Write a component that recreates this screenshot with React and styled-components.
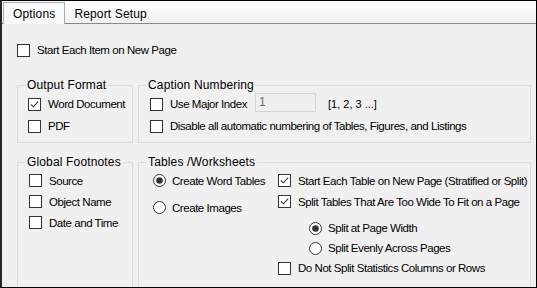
import React from "react";
import styled, { createGlobalStyle } from "styled-components";

const Global = createGlobalStyle`
  html, body { margin: 0; padding: 0; background: #f0f0f0; }
  body { font-family: "Liberation Sans", Arial, sans-serif; }
`;

const Window = styled.div`
  width: 537px;
  height: 288px;
  box-sizing: border-box;
  border: 1px solid #000;
  border-left: 2px solid #262626;
  background: #f0f0f0;
  overflow: hidden;
  display: flex;
  flex-direction: column;
  font-family: "Liberation Sans", Arial, sans-serif;
  font-size: 12px;
  color: #000;
`;

const TabStrip = styled.div`
  flex: none;
  display: flex;
  align-items: flex-end;
  height: 22px;
  padding-left: 1px;
  background: linear-gradient(#ffffff, #f1f1f1);
  border-bottom: 1px solid #8a8a8a;
`;

const Tab = styled.div`
  box-sizing: border-box;
  height: ${(p) => (p.$active ? "22px" : "20px")};
  margin-bottom: ${(p) => (p.$active ? "-1px" : "0")};
  padding: 0 ${(p) => (p.$active ? "9px" : "8px")};
  display: flex;
  align-items: center;
  border: 1px solid ${(p) => (p.$active ? "#acacac" : "transparent")};
  border-bottom: none;
  background: ${(p) => (p.$active ? "#f9f9f9" : "transparent")};
  position: relative;
  white-space: nowrap;
  letter-spacing: 0.15px;
`;

const Page = styled.div`
  flex: none;
  display: flex;
  flex-direction: column;
  padding: 16px 0 0 15px;
`;

const Groups = styled.div`
  display: grid;
  grid-template-columns: 116px 393px;
  column-gap: 5px;
  row-gap: 12px;
  margin-top: 18px;
`;

const Group = styled.fieldset`
  margin: 0;
  padding: 0;
  min-width: 0;
  box-sizing: border-box;
  border: 1px solid #dcdcdc;
`;

const Legend = styled.legend`
  margin-left: 7px;
  padding: 0 2px;
  font-size: 12px;
  line-height: 14px;
  letter-spacing: 0.15px;
`;

const Body = styled.div`
  padding: 1px 0 ${(p) => p.$pb}px ${(p) => p.$pl}px;
`;

const Option = styled.label`
  display: flex;
  align-items: center;
  gap: ${(p) => (p.$radio ? "6px" : "7px")};
  height: ${(p) => p.$h || 21}px;
  width: ${(p) => (p.$w ? `${p.$w}px` : "auto")};
  margin-left: ${(p) => p.$indent || 0}px;
  margin-top: ${(p) => p.$mt || 0}px;
  white-space: nowrap;
  flex: none;
  font-size: 11.5px;
  letter-spacing: -0.45px;
`;

const BoxSvg = styled.svg`
  flex: none;
  display: block;
  margin-left: ${(p) => (p.$radio ? "3px" : "0")};
`;

const Row = styled.div`
  display: flex;
  align-items: flex-start;
  height: ${(p) => p.$h}px;
`;

const TextBox = styled.div`
  box-sizing: border-box;
  width: 61px;
  height: 19px;
  border: 1px solid #d4d4d4;
  background: #f0f0f0;
  color: #6d6d6d;
  padding-left: 3px;
  line-height: 17px;
  font-size: 12px;
`;

const Hint = styled.span`
  font-size: 11px;
  margin-left: 12px;
  line-height: 22px;
`;

const TwoCols = styled.div`
  display: grid;
  grid-template-columns: 128px 1fr;
`;

const Col = styled.div`
  display: flex;
  flex-direction: column;
`;

function Check({ checked }) {
  return (
    <BoxSvg width="13" height="13" viewBox="0 0 13 13">
      <rect x="0.5" y="0.5" width="12" height="12" fill="#fff" stroke="#333" />
      {checked && (
        <path d="M2.8 6.3 L5.3 8.8 L10.2 3.6" fill="none" stroke="#333" strokeWidth="1.1" />
      )}
    </BoxSvg>
  );
}

function Radio({ checked }) {
  return (
    <BoxSvg $radio width="13" height="13" viewBox="0 0 13 13">
      <circle cx="6.5" cy="6.5" r="6" fill="#fff" stroke="#333" />
      {checked && <circle cx="6.5" cy="6.5" r="3.3" fill="#333" />}
    </BoxSvg>
  );
}

function CheckOption({ label, checked, ...rest }) {
  return (
    <Option {...rest}>
      <Check checked={checked} />
      <span>{label}</span>
    </Option>
  );
}

function RadioOption({ label, checked, ...rest }) {
  return (
    <Option $radio {...rest}>
      <Radio checked={checked} />
      <span>{label}</span>
    </Option>
  );
}

export default function App() {
  return (
    <>
      <Global />
      <Window>
        <TabStrip>
          <Tab $active>Options</Tab>
          <Tab>Report Setup</Tab>
        </TabStrip>
        <Page>
          <CheckOption label="Start Each Item on New Page" $h={20} />
          <Groups>
            <Group>
              <Legend>Output Format</Legend>
              <Body $pl={10} $pb={5}>
                <CheckOption label="Word Document" checked $h={22} />
                <CheckOption label="PDF" $h={22} />
              </Body>
            </Group>
            <Group>
              <Legend>Caption Numbering</Legend>
              <Body $pl={11} $pb={5}>
                <Row $h={22}>
                  <CheckOption label="Use Major Index" $h={22} $w={105} />
                  <TextBox>1</TextBox>
                  <Hint>[1, 2, 3 ...]</Hint>
                </Row>
                <CheckOption
                  label="Disable all automatic numbering of Tables, Figures, and Listings"
                  $h={22}
                />
              </Body>
            </Group>
            <Group>
              <Legend>Global Footnotes</Legend>
              <Body $pl={11} $pb={14}>
                <CheckOption label="Source" />
                <CheckOption label="Object Name" />
                <CheckOption label="Date and Time" />
              </Body>
            </Group>
            <Group>
              <Legend>Tables /Worksheets</Legend>
              <Body $pl={11} $pb={30}>
                <TwoCols>
                  <Col>
                    <RadioOption label="Create Word Tables" checked />
                    <RadioOption label="Create Images" $mt={6} />
                  </Col>
                  <Col>
                    <CheckOption label="Start Each Table on New Page (Stratified or Split)" checked />
                    <CheckOption label="Split Tables That Are Too Wide To Fit on a Page" checked />
                    <RadioOption label="Split at Page Width" checked $indent={28} $mt={6} $h={20} />
                    <RadioOption label="Split Evenly Across Pages" $indent={28} $h={20} />
                    <CheckOption label="Do Not Split Statistics Columns or Rows" $h={20} />
                  </Col>
                </TwoCols>
              </Body>
            </Group>
          </Groups>
        </Page>
      </Window>
    </>
  );
}
